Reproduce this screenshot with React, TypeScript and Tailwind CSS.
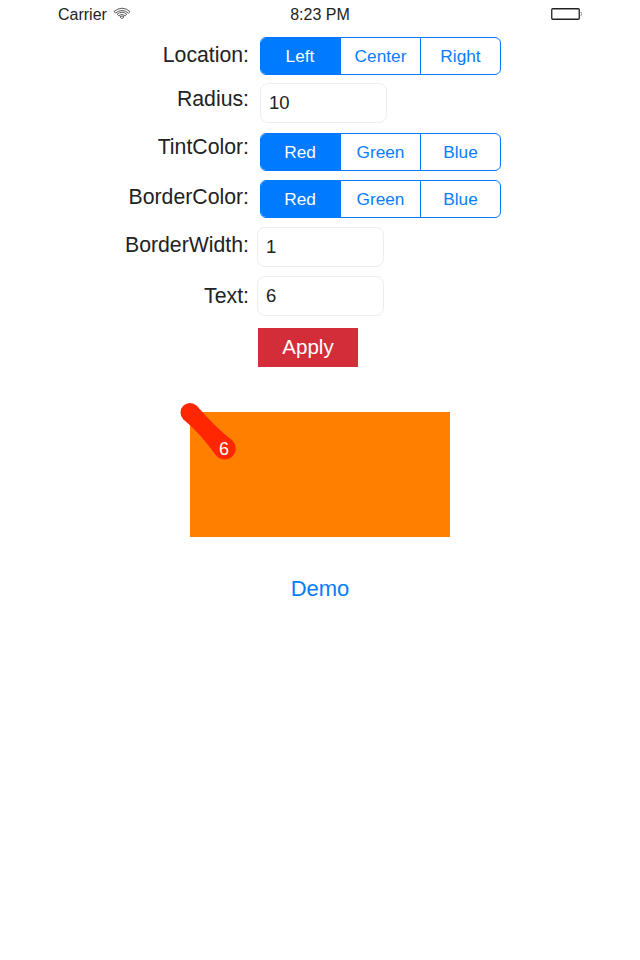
import React from "react";

function Row({ label, className, labelClass, children }: {
  label: string;
  className: string;
  labelClass: string;
  children: React.ReactNode;
}) {
  return (
    <div className={`flex items-start ${className}`}>
      <label className={`w-[249px] shrink-0 text-right text-[21.25px] leading-6 text-[#222] ${labelClass}`}>{label}</label>
      {children}
    </div>
  );
}

function Segmented({ options }: { options: string[] }) {
  return (
    <div className="ml-[11px] flex h-[38px] w-[241px] overflow-hidden rounded-[6px] border border-[#007aff] text-[17.25px] text-[#087cff]">
      {options.map((o, i) => (
        <button
          key={o}
          className={
            i === 0
              ? "flex w-[79px] items-center justify-center bg-[#007aff] pr-px pt-[2px] text-white"
              : "flex flex-1 items-center justify-center border-l border-[#007aff] pt-[2px]"
          }
        >
          {o}
        </button>
      ))}
    </div>
  );
}

function Field({ value, className }: { value: string; className: string }) {
  return (
    <input
      defaultValue={value}
      className={`h-10 w-[127px] rounded-[8px] border border-[#ededed] bg-white px-[8px] text-[18.5px] text-[#222] outline-none ${className}`}
    />
  );
}

export default function App() {
  return (
    <div className="h-[960px] w-[640px] overflow-hidden bg-white font-['Liberation_Sans',Arial,sans-serif]">
      <header className="grid h-[37px] grid-cols-3 items-start pt-[5px] text-[16px] leading-[18px] text-[#222]">
        <div className="flex pl-[58px] pt-px">
          <span>Carrier</span>
          <svg className="ml-[6px] mt-px" width="18" height="13" viewBox="0 0 18 13" fill="none" stroke="#333" strokeWidth="0.8">
            <path d="M1 4.5Q9-2.1 17 4.5L15.4 6.1Q9 .9 2.6 6.1Z" />
            <path d="M4.2 7.2Q9 3.2 13.8 7.2L12.3 8.7Q9 6.1 5.7 8.7Z" />
            <path d="M7 9.8Q9 8.1 11 9.8L9 11.8Z" />
          </svg>
        </div>
        <div className="pt-px text-center">8:23 PM</div>
        <div className="flex items-center justify-end pr-[57px] pt-[3px]">
          <svg width="32" height="12" viewBox="0 0 32 12" fill="none">
            <rect x="0.75" y="0.75" width="27.5" height="10.5" rx="1" stroke="#222" strokeWidth="1.3" />
            <path d="M29.5 4Q31.5 6 29.5 8" stroke="#555" strokeDasharray="1.5 1" />
          </svg>
        </div>
      </header>

      <Row label="Location:" className="h-[46px]" labelClass="pt-[6px]">
        <Segmented options={["Left", "Center", "Right"]} />
      </Row>
      <Row label="Radius:" className="h-[50px]" labelClass="pt-[4px]">
        <Field value="10" className="ml-[11px]" />
      </Row>
      <Row label="TintColor:" className="h-[47px]" labelClass="pt-[2px]">
        <Segmented options={["Red", "Green", "Blue"]} />
      </Row>
      <Row label="BorderColor:" className="h-[47px]" labelClass="pt-[5px]">
        <Segmented options={["Red", "Green", "Blue"]} />
      </Row>
      <Row label="BorderWidth:" className="h-[49px]" labelClass="pt-[6px]">
        <Field value="1" className="ml-[8px]" />
      </Row>
      <Row label="Text:" className="h-[52px]" labelClass="pt-[8px]">
        <Field value="6" className="ml-[8px]" />
      </Row>
      <button className="ml-[258px] flex h-[39px] w-[100px] items-center justify-center bg-[#d32d39] text-[20.5px] text-white">Apply</button>

      <div className="relative ml-[190px] mt-[45px] h-[125px] w-[260px] bg-[#ff8000]">
        <svg className="absolute -left-[10px] -top-[12px]" width="60" height="64" viewBox="180 400 60 64">
          <g fill="#ff2600">
            <circle cx="190" cy="412.5" r="9.5" />
            <circle cx="224.7" cy="448.5" r="11" />
            <path d="M197 406Q213.5 425.5 232.3 440.5L216 455.5Q200 433 183.5 419.5Z" />
          </g>
          <text x="224" y="454.5" textAnchor="middle" fontSize="18" fill="#fff">6</text>
        </svg>
      </div>

      <div className="mt-[38px] flex justify-center">
        <button className="text-[22px] leading-7 text-[#087cff]">Demo</button>
      </div>
    </div>
  );
}
